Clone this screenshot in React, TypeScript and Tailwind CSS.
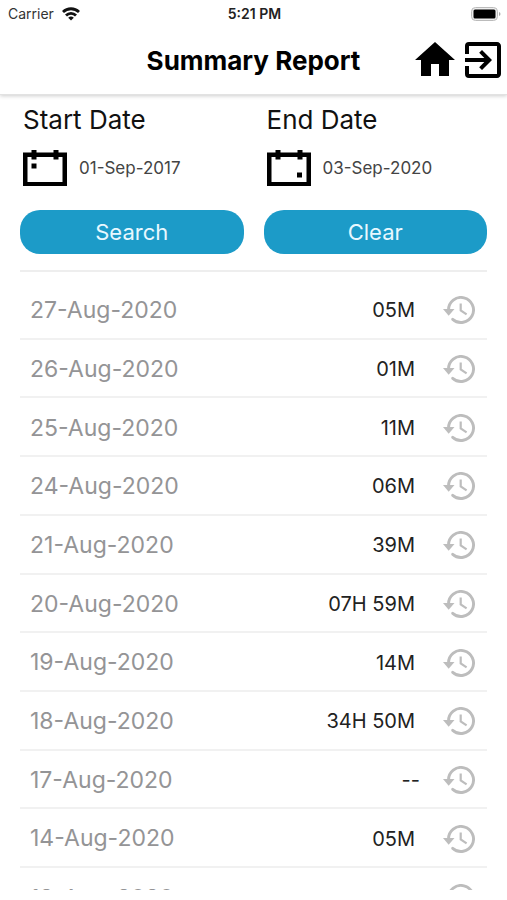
import { MdExitToApp, MdHome } from 'react-icons/md';

const entries = [
  { date: '27-Aug-2020', total: '05M' },
  { date: '26-Aug-2020', total: '01M' },
  { date: '25-Aug-2020', total: '11M' },
  { date: '24-Aug-2020', total: '06M' },
  { date: '21-Aug-2020', total: '39M' },
  { date: '20-Aug-2020', total: '07H 59M' },
  { date: '19-Aug-2020', total: '14M' },
  { date: '18-Aug-2020', total: '34H 50M' },
  { date: '17-Aug-2020', total: '--' },
  { date: '14-Aug-2020', total: '05M' },
];

function StatusBar() {
  return (
    <div className="grid h-7 grid-cols-3 items-center pr-1.5 pl-2 text-sm">
      <div className="flex items-center gap-2 text-[#333]">
        <span>Carrier</span>
        <svg className="h-[14px] w-[18px]" viewBox="0 0 18 14" fill="none" stroke="#111" strokeWidth="2.8">
          <path d="M1 5a11.5 11.5 0 0 1 16 0" />
          <path d="M4 8.500a7 7 0 0 1 10 0" />
          <path d="M9 13.600 6.200 10.800a4 4 0 0 1 5.600 0z" fill="#111" stroke="none" />
        </svg>
      </div>
      <div className="text-center font-semibold text-[#222]">5:21 PM</div>
      <svg className="h-[14px] w-[30px] justify-self-end" viewBox="0 0 30 14">
        <rect x="0.5" y="0.5" width="26" height="13" rx="4" fill="#eee" stroke="#bbb" />
        <rect x="2.5" y="2.5" width="22" height="9" rx="1.5" fill="#000" />
        <path d="M28 5c2 .8 2 3.200 0 4z" fill="#aaa" />
      </svg>
    </div>
  );
}

function CalendarIcon({ end = false }: { end?: boolean }) {
  return (
    <svg className="h-9 w-11" viewBox="0 0 44 36">
      <path fillRule="evenodd" d="M0 2.500h44.500V36H0zM4.500 7v25h35V7z" />
      <path d="M8.500 0h5v9.500h-5zM30.500 0h5v9.500h-5z" />
      {end ? <path d="M30 22.500h5v5h-5z" /> : <path d="M8.500 13.500h5v5h-5z" />}
    </svg>
  );
}

function HistoryIcon() {
  return (
    <svg className="h-7 w-8 text-[#bdbdbd]" viewBox="0 0 32 28" fill="none" stroke="currentColor">
      <path d="M5.500 14A12.500 12.500 0 1 1 9.700 23.300" strokeWidth="2.900" strokeLinecap="round" />
      <path d="M0 13h11.500L5.700 19.800z" fill="currentColor" stroke="none" />
      <path d="M17.700 7.500v7l5.900 3.900" strokeWidth="2.200" />
    </svg>
  );
}

type DateFieldProps = { id: string; label: string; value: string; end?: boolean };

function DateField({ id, label, value, end }: DateFieldProps) {
  return (
    <div className="pl-[3px]">
      <label htmlFor={id} className="block text-[26px] leading-8">
        {label}
      </label>
      <div className="mt-[14px] flex items-center gap-3">
        <button type="button" aria-label={label}>
          <CalendarIcon end={end} />
        </button>
        <input id={id} defaultValue={value} readOnly className="w-full min-w-0 pt-0.5 text-[17px] text-[#444] outline-none" />
      </div>
    </div>
  );
}

function Row({ date, total }: { date: string; total: string }) {
  return (
    <li className="flex min-h-14 flex-1 items-center border-b-2 border-[#f1f1f1] px-3 pt-0.5 pl-[10px]">
      <span className="flex-1 text-[23px] text-[#949496]">{date}</span>
      <span className={total === '--' ? 'mr-[23px] text-xl text-[#222]' : 'mr-7 text-xl text-[#222]'}>{total}</span>
      <button type="button" aria-label={`History for ${date}`}>
        <HistoryIcon />
      </button>
    </li>
  );
}

export default function App() {
  return (
    <div className="flex h-screen flex-col bg-white pb-[10px] font-['Inter',sans-serif] text-[#111]">
      <header className="border-b border-[#e2e2e2] shadow-[0_1px_4px_rgba(0,0,0,0.2)]">
        <StatusBar />
        <div className="grid h-[66px] grid-cols-[1fr_auto_1fr] items-center pb-0.5">
          <h1 className="col-start-2 text-[26px] font-bold text-black">Summary Report</h1>
          <nav className="flex justify-end text-black">
            <a href="#home" aria-label="Home">
              <MdHome className="size-12" />
            </a>
            <a href="#logout" aria-label="Log out">
              <MdExitToApp className="size-12" />
            </a>
          </nav>
        </div>
      </header>

      <main className="flex min-h-0 flex-1 flex-col overflow-hidden px-5 pt-[9px]">
        {/* Date range */}
        <div className="grid grid-cols-2 gap-x-5 border-b-2 border-[#eee] pb-4">
          <DateField id="start" label="Start Date" value="01-Sep-2017" />
          <DateField id="end" label="End Date" value="03-Sep-2020" end />
          <button type="button" className="mt-6 h-11 rounded-[20px] bg-[#1c9bc8] text-[22px] text-[#e8f8ff]">
            Search
          </button>
          <button type="button" className="mt-6 h-11 rounded-[20px] bg-[#1c9bc8] text-[22px] text-[#e8f8ff]">
            Clear
          </button>
        </div>

        {/* Daily totals, the last row runs under the bottom edge */}
        <ul className="mt-[9px] flex flex-1 flex-col">
          {entries.map((entry) => (
            <Row key={entry.date} date={entry.date} total={entry.total} />
          ))}
          <li className="h-[22px] overflow-hidden">
            <ul className="flex h-[60px] flex-col">
              <Row date="13-Aug-2020" total="07H 17M" />
            </ul>
          </li>
        </ul>
      </main>
    </div>
  );
}
